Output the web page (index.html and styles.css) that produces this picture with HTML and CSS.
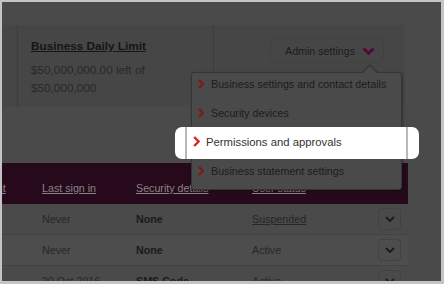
FILE: index.html
```html
<!DOCTYPE html>
<html lang="en">
<head>
<meta charset="utf-8">
<title>Admin settings</title>
<link rel="stylesheet" href="styles.css">
</head>
<body>
<div class="screen">
  <div class="canvas">
    <section class="card">
      <div class="card-col c1"></div>
      <div class="card-col c2">
        <a class="card-title">Business Daily Limit</a>
        <p class="card-text">$50,000,000.00 left of<br>$50,000,000</p>
      </div>
      <div class="card-col c3">
        <button class="admin-btn"><span>Admin settings</span>
          <svg width="13" height="8" viewBox="0 0 13 8"><polyline points="1.5,1.5 6.5,6.3 11.5,1.5" fill="none" stroke="#4e0c34" stroke-width="3"/></svg>
        </button>
      </div>
    </section>

    <div class="table">
      <div class="thead">
        <span class="th first">Account</span>
        <span class="th">Last sign in</span>
        <span class="th">Security details</span>
        <span class="th">User status</span>
        <span></span>
      </div>
      <div class="tr">
        <span class="first"></span>
        <span>Never</span>
        <span class="bold">None</span>
        <span class="link">Suspended</span>
        <span class="row-btn"><svg width="10" height="6" viewBox="0 0 10 6"><polyline points="1,1 5,5 9,1" fill="none" stroke="#1a1a1a" stroke-width="1.8"/></svg></span>
      </div>
      <div class="tr alt">
        <span class="first"></span>
        <span>Never</span>
        <span class="bold">None</span>
        <span>Active</span>
        <span class="row-btn"><svg width="10" height="6" viewBox="0 0 10 6"><polyline points="1,1 5,5 9,1" fill="none" stroke="#1a1a1a" stroke-width="1.8"/></svg></span>
      </div>
      <div class="tr">
        <span class="first"></span>
        <span>20 Oct 2016</span>
        <span class="bold">SMS Code</span>
        <span>Active</span>
        <span class="row-btn"><svg width="10" height="6" viewBox="0 0 10 6"><polyline points="1,1 5,5 9,1" fill="none" stroke="#1a1a1a" stroke-width="1.8"/></svg></span>
      </div>
    </div>
  </div>

  <nav class="menu">
    <div class="menu-item"><svg width="6" height="10" viewBox="0 0 6 10"><polyline points="1,1 5,5 1,9" fill="none" stroke="#7e1717" stroke-width="2.2"/></svg><span>Business settings and contact details</span></div>
    <div class="menu-item"><svg width="6" height="10" viewBox="0 0 6 10"><polyline points="1,1 5,5 1,9" fill="none" stroke="#7e1717" stroke-width="2.2"/></svg><span>Security devices</span></div>
    <div class="menu-item"><svg width="6" height="10" viewBox="0 0 6 10"><polyline points="1,1 5,5 1,9" fill="none" stroke="#7e1717" stroke-width="2.2"/></svg><span>Permissions and approvals</span></div>
    <div class="menu-item"><svg width="6" height="10" viewBox="0 0 6 10"><polyline points="1,1 5,5 1,9" fill="none" stroke="#7e1717" stroke-width="2.2"/></svg><span>Business statement settings</span></div>
  </nav>

  <div class="spot">
    <div class="spot-item"><svg width="7" height="11" viewBox="0 0 7 11"><polyline points="1.2,1 5.6,5.5 1.2,10" fill="none" stroke="#d3261d" stroke-width="2.4"/></svg><span>Permissions and approvals</span></div>
  </div>
</div>
</body>
</html>
```
FILE: styles.css
```css
* { box-sizing: border-box; }
html, body { margin: 0; }
body {
  width: 444px;
  height: 284px;
  background: #c4c4c4;
  padding: 2px 3px 3px 2px;
  font-family: "Liberation Sans", Arial, sans-serif;
  overflow: hidden;
}
.screen {
  position: relative;
  width: 439px;
  height: 279px;
  background: #4a4a4a;
  overflow: hidden;
}
.canvas {
  margin-left: -47px;
  padding-top: 23px;
  width: 453px;
}

/* card */
.card {
  display: flex;
  width: 449px;
  height: 82px;
  background: #464646;
}
.card-col { height: 100%; }
.c1 { width: 62px; }
.c2 {
  width: 196px;
  border-left: 1px solid #3d3d3d;
  padding: 13px 0 0 13px;
}
.c3 {
  width: 191px;
  border-left: 1px solid #3d3d3d;
  display: flex;
  justify-content: flex-end;
  align-items: flex-start;
  padding: 13px 20px 0 0;
}
.card-title {
  display: block;
  font-size: 11.75px;
  font-weight: bold;
  line-height: 15px;
  color: #151515;
  text-decoration: underline;
}
.card-text {
  margin: 8px 0 0;
  font-size: 11.75px;
  line-height: 17.5px;
  color: #282828;
}
.admin-btn {
  width: 114px;
  height: 25px;
  border: 1px solid #414141;
  border-radius: 5px;
  background: transparent;
  display: flex;
  align-items: center;
  justify-content: space-between;
  padding: 0 8px 0 14px;
  font-family: inherit;
  font-size: 10.7px;
  color: #1c1c1c;
}

/* table */
.table { margin-top: 56px; }
.thead, .tr {
  display: grid;
  grid-template-columns: 87px 94px 116px 126px 30px;
  font-size: 10.7px;
}
.thead {
  height: 41px;
  background: #260a1b;
  padding-top: 19px;
  line-height: 13px;
  color: #8a8286;
}
.th { text-decoration: underline; white-space: nowrap; }
.first { padding-left: 12px; }
.tr {
  height: 31px;
  align-items: center;
  border-bottom: 1px solid #434343;
  color: #272727;
}
.tr.alt { background: #4d4d4d; }
.bold { font-weight: bold; color: #1a1a1a; }
.link { text-decoration: underline; }
.row-btn {
  width: 23px;
  height: 22px;
  border: 1px solid #424242;
  border-radius: 4px;
  display: flex;
  align-items: center;
  justify-content: center;
}

/* dropdown menu */
.menu {
  position: absolute;
  left: 189px;
  top: 70px;
  width: 211px;
  height: 118px;
  background: #4a4a4a;
  border: 1px solid #353535;
  border-radius: 3px;
  box-shadow: 1px 1px 3px rgba(0, 0, 0, 0.3);
}
.menu::before,
.menu::after {
  content: "";
  position: absolute;
  width: 0;
  height: 0;
  border-style: solid;
  border-color: transparent;
}
.menu::before {
  left: 169px;
  top: -9px;
  border-width: 0 9px 9px 9px;
  border-bottom-color: #353535;
}
.menu::after {
  left: 170px;
  top: -7px;
  border-width: 0 8px 8px 8px;
  border-bottom-color: #4a4a4a;
}
.menu-item {
  display: flex;
  align-items: center;
  gap: 7px;
  height: 29px;
  padding: 0 0 7px 6px;
  font-size: 10.7px;
  color: #1c1c1c;
  white-space: nowrap;
}

/* spotlight */
.spot {
  position: absolute;
  left: 173px;
  top: 125px;
  width: 244px;
  height: 32px;
  background: #fff;
  border-radius: 7px;
  padding: 0 11px 0 10px;
}
.spot-item {
  height: 100%;
  border-left: 2px solid #b9b9b9;
  border-right: 2px solid #b9b9b9;
  display: flex;
  align-items: center;
  gap: 6px;
  padding: 0 0 3px 6px;
  font-size: 11.3px;
  color: #333;
  white-space: nowrap;
}
```
